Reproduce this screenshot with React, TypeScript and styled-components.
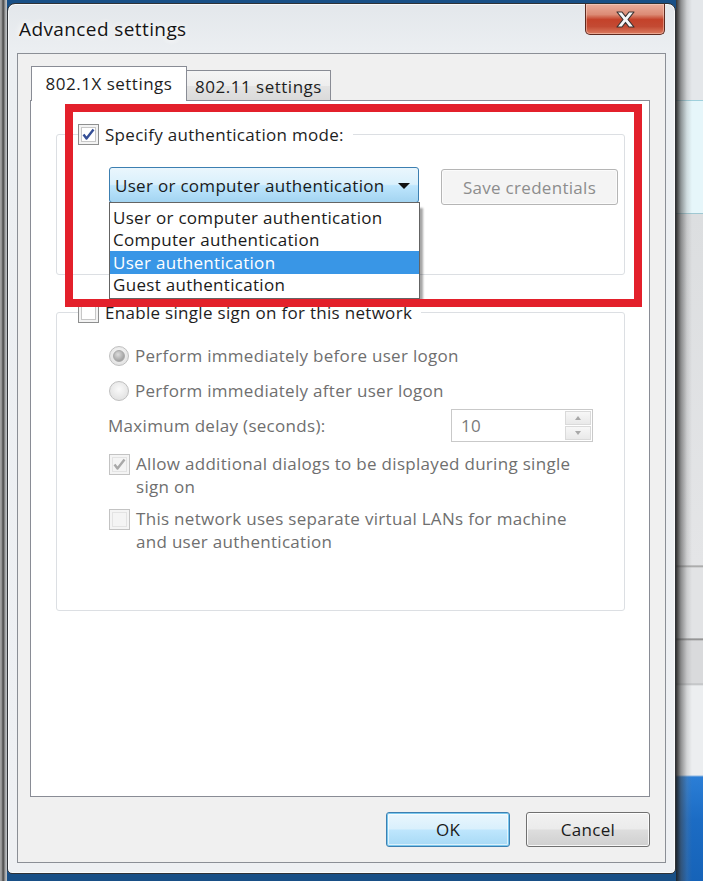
import React from 'react';
import styled, { createGlobalStyle, css } from 'styled-components';

const Global = createGlobalStyle`
  html, body { margin: 0; padding: 0; }
  body {
    width: 703px; height: 881px; overflow: hidden;
    font-family: "Open Sans", "Noto Sans", "Liberation Sans", sans-serif;
    -webkit-font-smoothing: antialiased;
  }
  * { box-sizing: border-box; }
`;

const Desktop = styled.div`
  width: 703px;
  height: 881px;
  display: flex;
  align-items: stretch;
  background: #184f86;
  overflow: hidden;
`;

const LeftStrip = styled.div`
  width: 7px;
  flex: none;
  background: linear-gradient(to right, #a9a9a9 0, #8a8a8a 2px, #3c3c3c 3px, #6e6e6e 4px, #b9bcbf 6px);
`;

const RightStrip = styled.div`
  flex: 1;
  background:
    linear-gradient(to right, rgba(30, 30, 30, 0.9) 0, rgba(70, 70, 70, 0.55) 5px, rgba(120, 120, 120, 0.2) 11px, rgba(0, 0, 0, 0) 16px),
    linear-gradient(to bottom,
      #e4e7ea 0, #e4e7ea 100px,
      #9fd0dc 100px, #9fd0dc 101px,
      #e6f6fa 101px, #e6f6fa 213px,
      #9fc8d2 213px, #9fc8d2 214px,
      #dcdee0 214px, #e4e5e7 565px,
      #9a9a9a 566px, #e2e3e5 568px,
      #e2e3e5 638px, #7e7e7e 639px, #d9dadc 641px, #d9dadc 683px,
      #b8babc 684px, #eceef0 686px, #eceef0 775px,
      #2b7ed6 777px, #1c6cc4 820px, #1663b8 881px);
`;

const Window = styled.div`
  width: 669px;
  height: 871px;
  margin-top: 3px;
  flex: none;
  display: flex;
  flex-direction: column;
  border: 1px solid #2f3236;
  border-radius: 8px 8px 5px 5px;
  padding: 0 9px 10px 9px;
  background: linear-gradient(to bottom, #e3e7eb 0, #eceff2 50px, #eef0f3 100%);
  box-shadow: inset 0 0 0 1px rgba(255, 255, 255, 0.7);
`;

const TitleBar = styled.div`
  height: 49px;
  display: flex;
  align-items: center;
  justify-content: space-between;
  padding-left: 2px;
`;

const Title = styled.span`
  font-size: 19px;
  color: #151515;
  letter-spacing: 0.4px;
  margin-top: 1px;
  text-shadow: 0 0 10px #fff, 0 0 6px #fff;
`;

const CloseButton = styled.div`
  align-self: flex-start;
  width: 80px;
  height: 31px;
  margin-right: 1px;
  display: flex;
  align-items: center;
  justify-content: center;
  border: 1px solid #5e2a20;
  border-top: none;
  border-radius: 0 0 5px 5px;
  background: linear-gradient(to bottom, #e9ad9c 0%, #dc8b75 35%, #c4422a 52%, #c34a33 75%, #dc7c60 100%);
  box-shadow: inset 0 0 0 1px rgba(255, 225, 210, 0.45);
`;

const Client = styled.div`
  flex: 1;
  display: flex;
  flex-direction: column;
  border: 1px solid #8b8f96;
  background: #f0f0f0;
  padding: 12px 15px 15px 12px;
`;

const TabStrip = styled.div`
  display: flex;
  align-items: flex-end;
  height: 35px;
  margin-bottom: -1px;
  position: relative;
  z-index: 1;
`;

const Tab = styled.div<{ $active?: boolean }>`
  display: flex;
  align-items: center;
  justify-content: center;
  font-size: 17px;
  letter-spacing: 0.5px;
  color: #1e1e1e;
  border: 1px solid #898c95;
  ${(p) =>
    p.$active
      ? css`
          width: 156px;
          height: 35px;
          margin-left: 1px;
          background: #fff;
          border-bottom: none;
          padding-bottom: 2px;
        `
      : css`
          width: 144px;
          height: 31px;
          border-left: none;
          background: linear-gradient(to bottom, #f5f5f5 0%, #eeeeee 50%, #e4e4e4 51%, #dadada 100%);
          padding-top: 2px;
        `}
`;

const TabPanel = styled.div`
  height: 697px;
  border: 1px solid #898c95;
  background: #fff;
  position: relative;
  padding: 33px 24px 0 25px;
`;

const GroupBox = styled.div<{ $height: number; $top?: number }>`
  height: ${(p) => p.$height}px;
  margin-top: ${(p) => p.$top ?? 0}px;
  border: 1px solid #dcdfe3;
  border-radius: 3px;
`;

const Legend = styled.div`
  display: flex;
  align-items: center;
  gap: 6px;
  width: fit-content;
  height: 22px;
  margin: -12px 0 0 21px;
  padding-right: 9px;
  background: #fff;
  font-size: 17px;
  letter-spacing: 0.3px;
  color: #1e1e1e;
`;

const Box = styled.span<{ $disabled?: boolean }>`
  width: 21px;
  height: 21px;
  flex: none;
  display: flex;
  align-items: center;
  justify-content: center;
  border: 1px solid ${(p) => (p.$disabled ? '#c3c3c3' : '#8e8f8f')};
  background: ${(p) => (p.$disabled ? '#f4f4f4' : '#fff')};
  box-shadow: inset 0 0 0 2px ${(p) => (p.$disabled ? '#f4f4f4' : '#f3f3f3')},
    inset 0 0 0 3px ${(p) => (p.$disabled ? '#e3e3e3' : '#c7c7c7')};
`;

const ControlsRow = styled.div`
  display: flex;
  align-items: flex-start;
  gap: 22px;
  margin-top: 22px;
  padding-left: 52px;
`;

const ComboWrap = styled.div`
  position: relative;
  width: 310px;
`;

const Combo = styled.div`
  height: 36px;
  display: flex;
  align-items: center;
  justify-content: space-between;
  padding: 0 8px 0 5px;
  border: 1px solid #3c7fb1;
  border-radius: 3px;
  background: linear-gradient(to bottom, #eaf6fd 0%, #d9f0fc 48%, #bee6fd 52%, #a3d4f1 100%);
  font-size: 17px;
  letter-spacing: 0.3px;
  color: #1a1a1a;
`;

const Arrow = styled.span`
  width: 0;
  height: 0;
  border-left: 6px solid transparent;
  border-right: 6px solid transparent;
  border-top: 6px solid #111;
  margin-top: 2px;
`;

const List = styled.div`
  position: absolute;
  left: 0;
  top: 35px;
  width: 311px;
  padding: 3px 0 2px;
  border: 1px solid #646464;
  background: #fff;
  box-shadow: 4px 5px 2px -1px rgba(0, 0, 0, 0.35);
  z-index: 2;
`;

const Item = styled.div<{ $selected?: boolean }>`
  height: 22.5px;
  display: flex;
  align-items: center;
  padding-left: 3px;
  font-size: 17px;
  letter-spacing: 0.3px;
  color: ${(p) => (p.$selected ? '#fff' : '#1a1a1a')};
  background: ${(p) => (p.$selected ? '#3996e6' : 'transparent')};
`;

const Button = styled.div<{ $kind?: 'disabled' | 'default' | 'normal' }>`
  display: flex;
  align-items: center;
  justify-content: center;
  font-size: 17px;
  letter-spacing: 0.3px;
  border-radius: 3px;
  ${(p) =>
    p.$kind === 'disabled'
      ? css`
          width: 177px;
          height: 36px;
          margin-top: 2px;
          color: #8d8d8d;
          border: 1px solid #b5b5b5;
          background: #f4f4f4;
          box-shadow: inset 0 0 0 1px #fbfbfb;
        `
      : p.$kind === 'default'
      ? css`
          width: 124px;
          height: 35px;
          color: #1a1a1a;
          border: 1px solid #3c7fb1;
          background: linear-gradient(to bottom, #eaf6fd 0%, #d9f0fc 48%, #bee6fd 52%, #a7d9f5 100%);
          box-shadow: inset 0 0 0 1px #7ac8ee, inset 0 0 0 2px rgba(255, 255, 255, 0.6);
        `
      : css`
          width: 124px;
          height: 35px;
          color: #1a1a1a;
          border: 1px solid #707070;
          background: linear-gradient(to bottom, #f2f2f2 0%, #ebebeb 48%, #dddddd 52%, #cfcfcf 100%);
          box-shadow: inset 0 0 0 1px rgba(255, 255, 255, 0.8);
        `}
`;

const Row = styled.div<{ $top: number; $wrap?: boolean }>`
  display: flex;
  align-items: ${(p) => (p.$wrap ? 'flex-start' : 'center')};
  gap: 6px;
  margin-top: ${(p) => p.$top}px;
  padding-left: 52px;
  font-size: 17px;
  letter-spacing: 0.3px;
  line-height: 23px;
  color: #6f6f6f;
`;

const SpinRow = styled(Row)`
  justify-content: space-between;
  padding-left: 51px;
  padding-right: 31px;
`;

const Radio = styled.span<{ $checked?: boolean }>`
  width: 20px;
  height: 20px;
  flex: none;
  border-radius: 50%;
  border: 1px solid #bfbfbf;
  background: radial-gradient(circle at 50% 40%, #fafafa 0, #e4e4e4 70%);
  display: flex;
  align-items: center;
  justify-content: center;
  &::after {
    content: '';
    display: ${(p) => (p.$checked ? 'block' : 'none')};
    width: 10px;
    height: 10px;
    border-radius: 50%;
    background: radial-gradient(circle at 40% 35%, #dcdcdc 0, #9c9c9c 80%);
    border: 1px solid #a9a9a9;
  }
`;

const WrapBox = styled(Box)`
  margin-top: 2px;
`;

const Spin = styled.div`
  width: 142px;
  height: 33px;
  display: flex;
  align-items: stretch;
  border: 1px solid #c9c9c9;
  background: #fff;
`;

const SpinValue = styled.span`
  flex: 1;
  display: flex;
  align-items: center;
  padding-left: 9px;
  color: #7a7a7a;
`;

const SpinButtons = styled.div`
  width: 26px;
  margin: 1px;
  display: flex;
  flex-direction: column;
  gap: 1px;
`;

const SpinBtn = styled.div<{ $up?: boolean }>`
  flex: 1;
  display: flex;
  align-items: center;
  justify-content: center;
  border: 1px solid #dadada;
  background: linear-gradient(to bottom, #f7f7f7, #e9e9e9);
  &::after {
    content: '';
    width: 0;
    height: 0;
    border-left: 3px solid transparent;
    border-right: 3px solid transparent;
    ${(p) => (p.$up ? 'border-bottom: 4px solid #a8a8a8;' : 'border-top: 4px solid #a8a8a8;')}
  }
`;

const Footer = styled.div`
  display: flex;
  justify-content: flex-end;
  gap: 16px;
  margin-top: 15px;
`;

const RedFrame = styled.div`
  position: absolute;
  left: 34px;
  top: 3px;
  width: 577px;
  height: 203px;
  border: 8px solid #e3202b;
  pointer-events: none;
  z-index: 3;
`;

const Check = ({ color }: { color: string }) => (
  <svg width="13" height="13" viewBox="0 0 13 13">
    <path d="M1.5 6.5 L4.5 10.5 L11.5 1.5" fill="none" stroke={color} strokeWidth="2.4" strokeLinejoin="round" />
  </svg>
);

const CloseGlyph = () => (
  <svg width="19" height="17" viewBox="0 0 19 17">
    <path
      d="M1 1 H6 L9.5 5.5 L13 1 H18 L12 8.5 L18 16 H13 L9.5 11.5 L6 16 H1 L7 8.5 Z"
      fill="#f4f6f8"
      stroke="#3b3230"
      strokeWidth="1.2"
      strokeLinejoin="round"
    />
  </svg>
);

export default function App() {
  return (
    <>
      <Global />
      <Desktop>
        <LeftStrip />
        <Window>
          <TitleBar>
            <Title>Advanced settings</Title>
            <CloseButton>
              <CloseGlyph />
            </CloseButton>
          </TitleBar>
          <Client>
            <TabStrip>
              <Tab $active>802.1X settings</Tab>
              <Tab>802.11 settings</Tab>
            </TabStrip>
            <TabPanel>
              <GroupBox $height={141}>
                <Legend>
                  <Box>
                    <Check color="#354f96" />
                  </Box>
                  Specify authentication mode:
                </Legend>
                <ControlsRow>
                  <ComboWrap>
                    <Combo>
                      User or computer authentication
                      <Arrow />
                    </Combo>
                    <List>
                      <Item>User or computer authentication</Item>
                      <Item>Computer authentication</Item>
                      <Item $selected>User authentication</Item>
                      <Item>Guest authentication</Item>
                    </List>
                  </ComboWrap>
                  <Button $kind="disabled">Save credentials</Button>
                </ControlsRow>
              </GroupBox>
              <GroupBox $height={299} $top={37}>
                <Legend>
                  <Box />
                  Enable single sign on for this network
                </Legend>
                <Row $top={21}>
                  <Radio $checked />
                  Perform immediately before user logon
                </Row>
                <Row $top={12}>
                  <Radio />
                  Perform immediately after user logon
                </Row>
                <SpinRow $top={7}>
                  Maximum delay (seconds):
                  <Spin>
                    <SpinValue>10</SpinValue>
                    <SpinButtons>
                      <SpinBtn $up />
                      <SpinBtn />
                    </SpinButtons>
                  </Spin>
                </SpinRow>
                <Row $top={10} $wrap>
                  <WrapBox $disabled>
                    <Check color="#a9a9a9" />
                  </WrapBox>
                  <span>
                    Allow additional dialogs to be displayed during single
                    <br />
                    sign on
                  </span>
                </Row>
                <Row $top={9} $wrap>
                  <WrapBox $disabled />
                  <span>
                    This network uses separate virtual LANs for machine
                    <br />
                    and user authentication
                  </span>
                </Row>
              </GroupBox>
              <RedFrame />
            </TabPanel>
            <Footer>
              <Button $kind="default">OK</Button>
              <Button>Cancel</Button>
            </Footer>
          </Client>
        </Window>
        <RightStrip />
      </Desktop>
    </>
  );
}
